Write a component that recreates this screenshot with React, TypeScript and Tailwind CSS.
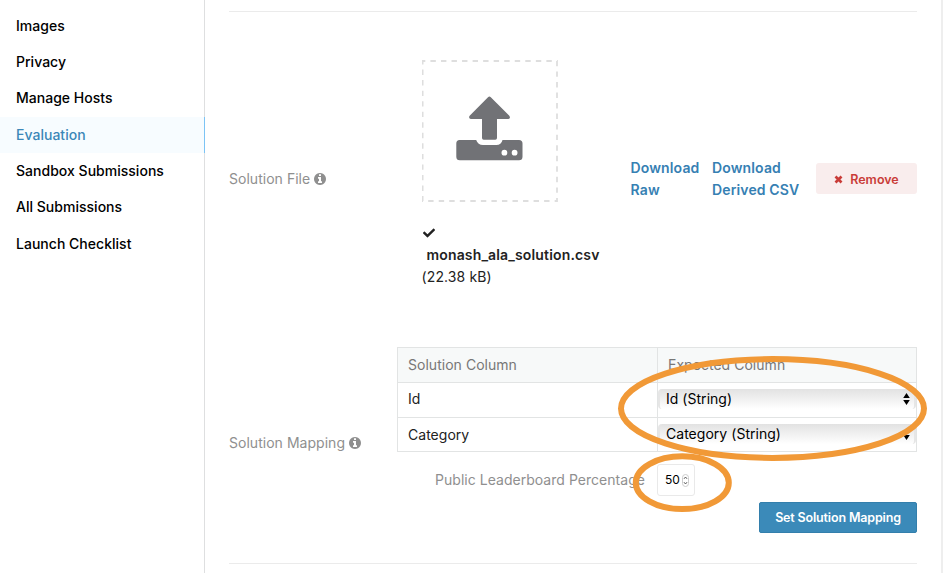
import { FaCheck } from "react-icons/fa";

const items = ["Images", "Privacy", "Manage Hosts", "Evaluation", "Sandbox Submissions", "All Submissions", "Launch Checklist"];

function Sidebar() {
  return (
    <nav className="flex h-full w-[205px] shrink-0 flex-col border-r border-[#dedfe0] pt-[7.5px] text-[14px] font-[450] tracking-[0.02px] text-black">
      {items.map((label) =>
        label === "Evaluation" ? (
          <a key={label} className="-mr-px flex h-[36.35px] shrink-0 items-center border-r border-[#7cc4f5] bg-[#f7fcff] pl-4 text-[#3c87b8]">
            {label}
          </a>
        ) : (
          <a key={label} className="flex h-[36.35px] shrink-0 items-center pl-4">
            {label}
          </a>
        ),
      )}
    </nav>
  );
}

function InfoIcon() {
  return (
    <svg width="12" height="12" viewBox="0 128 1536 1536" fill="currentColor" className="mt-[5px] shrink-0">
      <path d="M1024 1376v-160q0-14-9-23t-23-9h-96v-512q0-14-9-23t-23-9h-320q-14 0-23 9t-9 23v160q0 14 9 23t23 9h96v320h-96q-14 0-23 9t-9 23v160q0 14 9 23t23 9h448q14 0 23-9t9-23zm-128-896v-160q0-14-9-23t-23-9h-192q-14 0-23 9t-9 23v160q0 14 9 23t23 9h192q14 0 23-9t9-23zm640 416q0 209-103 385.500t-279.500 279.500-385.500 103-385.500-103-279.500-279.500-103-385.500 103-385.500 279.500-279.500 385.500-103 385.500 103 279.500 279.500 103 385.500z" />
    </svg>
  );
}

function UploadBox() {
  return (
    <svg width="136" height="142" viewBox="0 0 136 142" className="block">
      <rect x=".6" y="1" width="134.400" height="140" fill="none" stroke="#dedede" strokeWidth="1.800" strokeDasharray="5.400 5.140" strokeDashoffset="2.700" />
      <g fill="#717276">
        <path d="M66 37.200q1.400-1.400 2.800 0l18.300 18.200q1 1 .8 2.300q-.3 1.300-1.800 1.300H75v19q0 1.700-1.700 1.700h-11.600q-1.700 0-1.700-1.700v-19H49.200q-1.600 0-2-1.300q-.3-1.300.7-2.300z" />
        <path d="M37.500 80H54.200q1.700 5 6.800 5h13.300q5 0 6.200-5H97q3.500 0 3.500 3.500v13.200q0 3.500-3.500 3.500H37.800q-3.500 0-3.500-3.500V83.500q0-3.500 3.200-3.500zM79.500 92.700a2.900 2.900 0 1 0 5.800 0a2.900 2.900 0 1 0-5.800 0zM89.700 92.700a2.900 2.900 0 1 0 5.800 0a2.900 2.900 0 1 0-5.800 0z" fillRule="evenodd" />
      </g>
    </svg>
  );
}

function Select({ value }: { value: string }) {
  return (
    <div className="flex h-[20px] items-center justify-between rounded-[4px] border-x-2 border-[#e6e6e6] bg-linear-to-b from-[#e2e2e2] to-white pr-[4px] pl-[6px] text-black">
      <span>{value}</span>
      <svg width="7" height="12" viewBox="0 0 7 12">
        <path d="M3.500 0L6.800 5H.2zM3.500 12L6.800 7H.2z" fill="#000" />
      </svg>
    </div>
  );
}

export default function App() {
  return (
    <div className="relative flex h-[573px] w-[945px] overflow-hidden bg-white font-['Inter','Liberation_Sans',sans-serif] text-[14px] leading-[22px] tracking-[0.03px] text-[#222]">
      <Sidebar />
      <main className="flex w-[738px] flex-col border-r-2 border-[#eeeeee] pr-6 pl-6">
        <section className="mt-[11px] flex h-[336px] w-[688px] shrink-0 border-t border-[#ebebeb]">
          <div className="flex w-[192.500px] gap-[4px] pt-[156px] text-[#8f8f8f]">
            <span>Solution File</span>
            <InfoIcon />
          </div>
          <div className="w-[208.500px] pt-[48px]">
            <UploadBox />
            <FaCheck size={12} className="mt-[25px] ml-px" />
            <p className="mt-[5px] pl-[5px] font-semibold tracking-[0.150px] whitespace-nowrap">monash_ala_solution.csv</p>
            <p className="tracking-[0.120px]">(22.38 kB)</p>
          </div>
          <div className="flex w-[287px] pt-[145px] font-semibold tracking-[0.140px] text-[#3680b3]">
            <a className="w-[82px] pl-[0.500px]">Download<br />Raw</a>
            <a className="w-[104px]">Download<br />Derived CSV</a>
            <button className="mt-[6px] flex h-[31px] w-[101px] items-center justify-center gap-[7px] rounded-[3px] bg-[#f9eded] pt-[2px] text-[12.500px] tracking-normal text-[#c93c38]">
              <svg width="9" height="9" viewBox="0 0 9 9"><path d="M1.500 1.500l6 6m0-6l-6 6" stroke="currentColor" strokeWidth="2.700" /></svg>
              Remove
            </button>
          </div>
        </section>
        <section className="flex h-[217px] w-[688px] shrink-0 border-b border-[#ebebeb]">
          <div className="flex w-[168px] gap-[4px] pt-[85px] text-[#8f8f8f]">
            <span>Solution Mapping</span>
            <InfoIcon />
          </div>
          <div className="w-[520px]">
            <div className="grid h-[105px] grid-cols-[260px_258px] grid-rows-[35px_35px_33px] border border-[#e2e4e4]">
              <div className="flex items-center border-r border-b border-[#e2e4e4] bg-[#f7f9f9] pl-[10px] text-[#777]">Solution Column</div>
              <div className="flex items-center border-b border-[#e2e4e4] bg-[#f7f9f9] pl-[10px] text-[#777]">Expected Column</div>
              <div className="flex items-center border-r border-b border-[#e2e4e4] pb-[2px] pl-[10px]">Id</div>
              <div className="border-b border-[#e2e4e4] pt-[6px]"><Select value="Id (String)" /></div>
              <div className="flex items-center border-r border-[#e2e4e4] pl-[10px]">Category</div>
              <div className="pt-[6px]"><Select value="Category (String)" /></div>
            </div>
            <div className="mt-[12px] flex h-[32px] items-center pl-[38px]">
              <span className="w-[222px] whitespace-nowrap text-[#8f8f8f]">Public Leaderboard Percentage</span>
              <div className="flex h-[32px] w-[38px] items-center rounded-[3px] border border-[#e9e9e9] pl-[7px] text-[12px] tracking-[-0.1px] text-black">
                50
                <svg width="7" height="13" viewBox="0 0 7 13" className="ml-[2px]" fill="none">
                  <rect x=".5" y=".5" width="6" height="12" rx="3" stroke="#ccc" />
                  <path d="M2 4.800l1.500-1.800L5 4.800M2 8.200L3.500 10 5 8.200" stroke="#555" />
                </svg>
              </div>
            </div>
            <button className="mt-[6px] ml-auto flex h-[31px] w-[158px] items-center justify-center rounded-[2px] border border-[#337fac] bg-[#3b8ab9] pt-px text-[12.500px] font-semibold tracking-[-0.160px] text-white">Set Solution Mapping</button>
          </div>
        </section>
      </main>
      <svg width="945" height="573" viewBox="0 0 945 573" className="absolute top-0 left-0" fill="none" stroke="#f19937" strokeWidth="6">
        <ellipse cx="772.500" cy="408.500" rx="151.500" ry="49.400" />
        <ellipse cx="682.300" cy="482.700" rx="46.500" ry="26.400" />
      </svg>
    </div>
  );
}
